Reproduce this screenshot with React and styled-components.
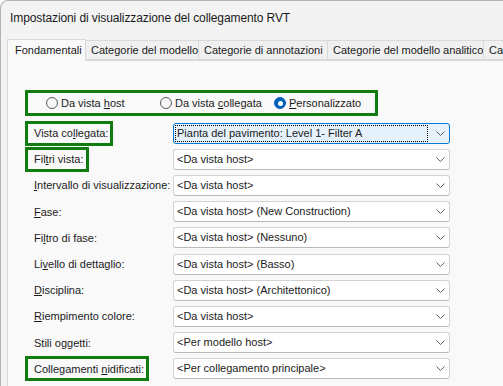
import * as React from "react";
import styled, { createGlobalStyle } from "styled-components";

const GREEN = "#107c10";

const GlobalStyle = createGlobalStyle`
  html, body {
    margin: 0;
    padding: 0;
    overflow: hidden;
    background: #ffffff;
  }
  body {
    font-family: "Liberation Sans", Arial, sans-serif;
    font-size: 11px;
    color: #1b1b1b;
  }
`;

const TABS = [
  { label: "Fondamentali", w: 79 },
  { label: "Categorie del modello", w: 113 },
  { label: "Categorie di annotazioni", w: 129 },
  { label: "Categorie del modello analitico", w: 156 },
  { label: "Categorie importate", w: 120 },
];

const ROWS = [
  { pre: "Vista co", key: "l", post: "legata:", value: "Pianta del pavimento: Level 1- Filter A", hl: true, focus: true },
  { pre: "Fil", key: "t", post: "ri vista:", value: "<Da vista host>", hl: true },
  { pre: "", key: "I", post: "ntervallo di visualizzazione:", value: "<Da vista host>" },
  { pre: "", key: "F", post: "ase:", value: "<Da vista host> (New Construction)" },
  { pre: "Fi", key: "l", post: "tro di fase:", value: "<Da vista host> (Nessuno)" },
  { pre: "Li", key: "v", post: "ello di dettaglio:", value: "<Da vista host> (Basso)" },
  { pre: "", key: "D", post: "isciplina:", value: "<Da vista host> (Architettonico)" },
  { pre: "", key: "R", post: "iempimento colore:", value: "<Da vista host>" },
  { pre: "Stili o", key: "g", post: "getti:", value: "<Per modello host>" },
  { pre: "Collegamenti ", key: "n", post: "idificati:", value: "<Per collegamento principale>", hl: true },
];

function Chevron() {
  return (
    <svg width="9" height="5" viewBox="0 0 9 5">
      <polyline points="0.5,0.5 4.5,4.5 8.5,0.5" fill="none" stroke="#5c5c5c" strokeWidth="1" />
    </svg>
  );
}

function Radio({ checked, pre, k, post, w }) {
  return (
    <RadioItem $w={w}>
      <RadioCircle $checked={checked} />
      <span>
        {pre}
        <u>{k}</u>
        {post}
      </span>
    </RadioItem>
  );
}

export default function App() {
  return (
    <>
      <GlobalStyle />
      <Window>
        <TitleBar>Impostazioni di visualizzazione del collegamento RVT</TitleBar>
        <TabStrip>
          {TABS.map((t, i) => (
            <Tab key={t.label} $active={i === 0} $w={t.w}>
              {t.label}
            </Tab>
          ))}
        </TabStrip>
        <Panel>
          <RadioGroup>
            <Radio pre="Da vista " k="h" post="ost" w={114} />
            <Radio pre="Da vista " k="c" post="ollegata" w={114} />
            <Radio checked pre="" k="P" post="ersonalizzato" />
          </RadioGroup>
          <Rows>
            {ROWS.map((r) => (
              <Row key={r.post}>
                <LabelBox $hl={r.hl}>
                  <span>
                    {r.pre}
                    <u>{r.key}</u>
                    {r.post}
                  </span>
                </LabelBox>
                <Select $focus={r.focus}>
                  <SelectText $focus={r.focus}>{r.value}</SelectText>
                  <Chevron />
                </Select>
              </Row>
            ))}
          </Rows>
        </Panel>
      </Window>
    </>
  );
}

const Window = styled.div`
  width: 540px;
  height: 400px;
  background: #f3f3f3;
  border-top: 1px solid #b4b4b4;
  border-left: 1px solid #b4b4b4;
  border-top-left-radius: 8px;
  display: flex;
  flex-direction: column;
`;

const TitleBar = styled.div`
  height: 37px;
  box-sizing: border-box;
  padding: 9px 0 0 9px;
  font-size: 12px;
  letter-spacing: -0.1px;
  line-height: 16px;
  color: #1a1a1a;
`;

const TabStrip = styled.div`
  display: flex;
  align-items: flex-end;
  height: 22px;
  padding-left: 6px;
  position: relative;
  z-index: 1;
`;

const Tab = styled.div`
  flex: none;
  box-sizing: border-box;
  width: ${(p) => p.$w}px;
  height: ${(p) => (p.$active ? 22 : 20)}px;
  margin-bottom: ${(p) => (p.$active ? -1 : 0)}px;
  padding: ${(p) => (p.$active ? "2px 0 0 7px" : "1px 0 0 5px")};
  line-height: 16px;
  white-space: nowrap;
  overflow: hidden;
  background: ${(p) => (p.$active ? "#f9f9f9" : "#f0f0f0")};
  border: 1px solid #d9d9d9;
  border-left: ${(p) => (p.$active ? "1px solid #d9d9d9" : "none")};
  border-bottom: ${(p) => (p.$active ? "none" : "1px solid #d9d9d9")};
  color: #1a1a1a;
`;

const Panel = styled.div`
  flex: 1;
  margin-left: 6px;
  background: #f9f9f9;
  border-top: 1px solid #d9d9d9;
  border-left: 1px solid #d9d9d9;
  padding: 29px 0 0 17px;
`;

const RadioGroup = styled.div`
  box-sizing: border-box;
  width: 353px;
  height: 26px;
  border: 3px solid ${GREEN};
  display: flex;
  align-items: center;
  padding-left: 18px;
`;

const RadioItem = styled.label`
  display: flex;
  align-items: center;
  gap: 3px;
  width: ${(p) => (p.$w ? `${p.$w}px` : "auto")};
  flex: none;
  white-space: nowrap;
`;

const RadioCircle = styled.span`
  box-sizing: border-box;
  width: 12px;
  height: 12px;
  border-radius: 50%;
  flex: none;
  position: relative;
  border: 1px solid ${(p) => (p.$checked ? "#005fb8" : "#5a5a5a")};
  background: ${(p) => (p.$checked ? "#005fb8" : "#f6f6f6")};
  &::after {
    content: "";
    display: ${(p) => (p.$checked ? "block" : "none")};
    position: absolute;
    left: 2.5px;
    top: 2.5px;
    width: 5px;
    height: 5px;
    border-radius: 50%;
    background: #ffffff;
  }
`;

const Rows = styled.div`
  margin-top: 4px;
  display: flex;
  flex-direction: column;
`;

const Row = styled.div`
  display: grid;
  grid-template-columns: 148px 277px;
  align-items: center;
  height: 26.2px;
`;

const LabelBox = styled.div`
  justify-self: start;
  box-sizing: border-box;
  height: 25px;
  display: flex;
  align-items: center;
  padding: 0 2px 0 6px;
  border: 3px solid ${(p) => (p.$hl ? GREEN : "transparent")};
  white-space: nowrap;
`;

const Select = styled.div`
  box-sizing: border-box;
  height: 21px;
  display: flex;
  align-items: center;
  justify-content: space-between;
  padding: 0 4px 0 2px;
  border-radius: 3px;
  border: 1px solid ${(p) => (p.$focus ? "#0078d4" : "#d3d3d3")};
  border-bottom-color: ${(p) => (p.$focus ? "#0078d4" : "#b9b9b9")};
  background: ${(p) => (p.$focus ? "#e5f1fb" : "#ffffff")};
`;

const SelectText = styled.span`
  flex: ${(p) => (p.$focus ? 1 : "none")};
  margin-right: ${(p) => (p.$focus ? 9 : 0)}px;
  padding-left: 1px;
  line-height: 15px;
  outline: ${(p) => (p.$focus ? "1px dotted #000" : "none")};
  white-space: nowrap;
`;
